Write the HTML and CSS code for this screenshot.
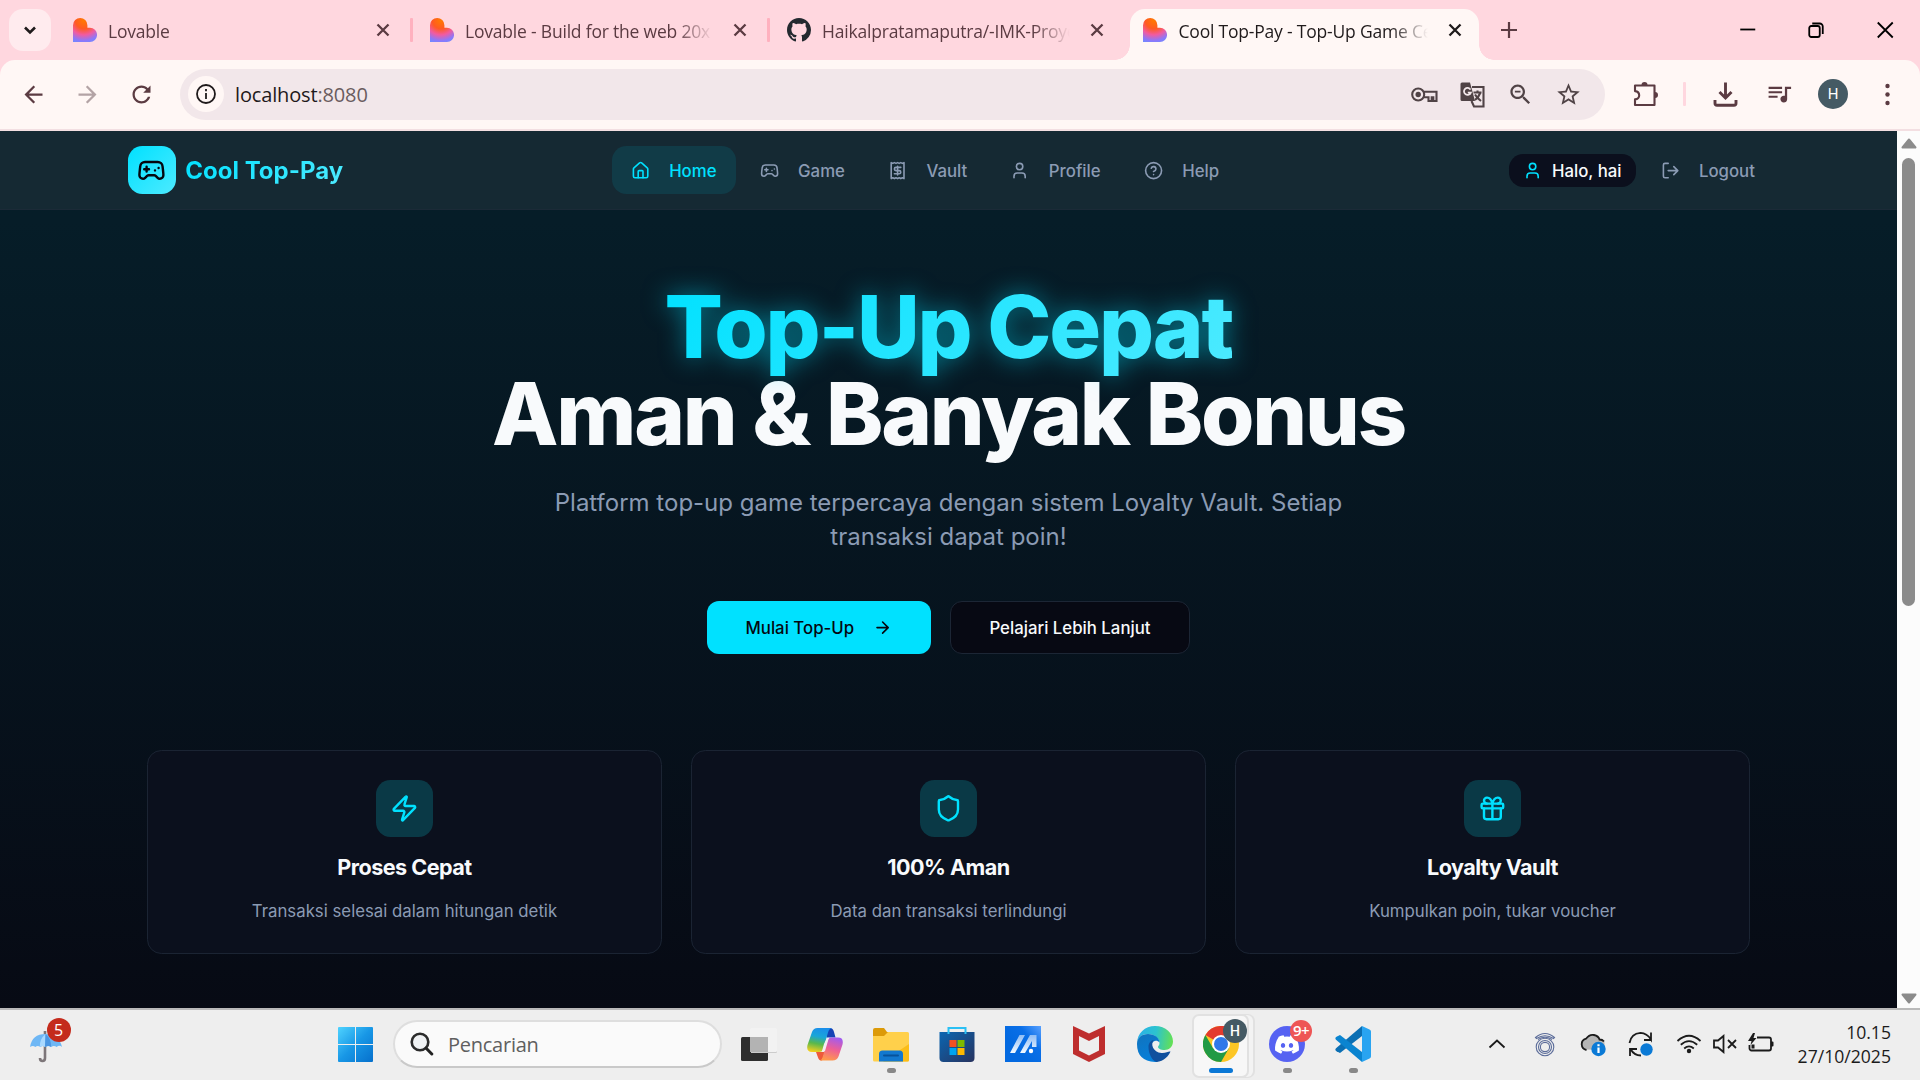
FILE: index.html
```html
<!DOCTYPE html>
<html lang="id">
<head>
<meta charset="utf-8">
<title>Cool Top-Pay - Top-Up Game Cepat</title>
<link rel="stylesheet" href="styles.css">
</head>
<body>
<svg class="defs" width="0" height="0" aria-hidden="true">
  <defs>
    <radialGradient id="heartFill" cx=".45" cy=".1" r="1" >
      <stop offset="0" stop-color="#ff7a00"/><stop offset=".35" stop-color="#ff5a22"/><stop offset=".6" stop-color="#f25ba0"/><stop offset=".85" stop-color="#8b78fb"/><stop offset="1" stop-color="#6c8cff"/>
    </radialGradient>
    <linearGradient id="win" x1="0" y1="0" x2="1" y2="1"><stop offset="0" stop-color="#4fd3ff"/><stop offset=".5" stop-color="#1897e6"/><stop offset="1" stop-color="#0670cc"/></linearGradient>
    <symbol id="heart" viewBox="0 0 24 24"><path fill="url(#heartFill)" d="M0 24V7.2a7.2 7.2 0 0 1 14.400 0v2.500h2.500a7.150 7.150 0 0 1 0 14.300z"/></symbol>
    <symbol id="close" viewBox="0 0 18 18"><path fill="none" stroke="currentColor" stroke-width="2.300" d="M3.500 3.500l11 11m0-11l-11 11"/></symbol>
    <symbol id="gamepad" viewBox="0 0 24 24"><path d="M6 11h4M8 9v4M15 12h.01M18 10h.01M17.320 5H6.680a4 4 0 0 0-3.978 3.590c-.006.052-.010.101-.017.152C2.604 9.416 2 14.456 2 16a3 3 0 0 0 3 3c1 0 1.500-.500 2-1l1.414-1.414A2 2 0 0 1 9.828 16h4.344a2 2 0 0 1 1.414.586L17 18c.500.500 1 1 2 1a3 3 0 0 0 3-3c0-1.545-.604-6.584-.685-7.258-.007-.050-.011-.100-.017-.151A4 4 0 0 0 17.320 5z"/></symbol>
    <symbol id="user" viewBox="0 0 24 24"><path d="M19 21v-2a4 4 0 0 0-4-4H9a4 4 0 0 0-4 4v2"/><circle cx="12" cy="7" r="4"/></symbol>
  </defs>
</svg>

<header class="tabstrip">
  <button class="tab-search"><svg width="18" height="18" viewBox="0 0 18 18"><path class="line" d="M4 6.500l5 5 5-5" stroke-width="2.600"/></svg></button>
  <div class="tab"><svg class="fav"><use href="#heart"/></svg><span class="tab-text">Lovable</span><svg class="x"><use href="#close"/></svg></div>
  <div class="tab"><svg class="fav"><use href="#heart"/></svg><span class="tab-text">Lovable - Build for the web 20x</span><svg class="x"><use href="#close"/></svg></div>
  <div class="tab last"><svg class="fav" viewBox="0 0 16 16"><path fill="#24292f" d="M8 0C3.580 0 0 3.580 0 8c0 3.540 2.290 6.530 5.470 7.590.400.070.550-.170.550-.380 0-.190-.010-.820-.010-1.490-2.010.370-2.530-.490-2.690-.940-.090-.230-.480-.940-.820-1.130-.280-.150-.680-.520-.010-.530.630-.010 1.080.580 1.230.820.720 1.210 1.870.870 2.330.660.070-.520.280-.870.510-1.070-1.780-.200-3.640-.890-3.640-3.950 0-.870.310-1.590.820-2.150-.080-.200-.360-1.020.080-2.120 0 0 .670-.210 2.200.820.640-.180 1.320-.270 2-.270s1.360.090 2 .270c1.530-1.040 2.200-.820 2.200-.820.440 1.100.160 1.920.080 2.120.510.560.820 1.270.820 2.150 0 3.070-1.870 3.750-3.650 3.950.290.250.540.730.540 1.480 0 1.070-.010 1.930-.010 2.200 0 .210.150.460.550.380A8.010 8.010 0 0 0 16 8c0-4.420-3.580-8-8-8z"/></svg><span class="tab-text">Haikalpratamaputra/-IMK-Proye</span><svg class="x"><use href="#close"/></svg></div>
  <div class="tab active"><svg class="fav"><use href="#heart"/></svg><span class="tab-text">Cool Top-Pay - Top-Up Game Ce</span><svg class="x"><use href="#close"/></svg></div>
  <svg class="newtab" width="18" height="18" viewBox="0 0 18 18"><path class="line" d="M9 1v16M1 9h16" stroke-width="2.200"/></svg>
  <div class="winctl">
    <svg viewBox="0 0 18 18"><path class="line" d="M1 8.500h15" stroke-width="2"/></svg>
    <svg viewBox="0 0 18 18"><rect class="line" x="2" y="5" width="10.500" height="11" rx="2"/><path class="line" d="M5 2.500h7.500a3 3 0 0 1 3 3v7.500"/></svg>
    <svg viewBox="0 0 18 18"><path class="line" d="M1.500 1.500l15 15m0-15l-15 15"/></svg>
  </div>
</header>

<div class="toolbar">
  <svg class="ic" viewBox="0 0 24 24"><path d="M20 11H7.830l5.590-5.590L12 4l-8 8 8 8 1.410-1.410L7.830 13H20v-2z"/></svg>
  <svg class="ic dim" viewBox="0 0 24 24"><path d="M4 11h12.170l-5.590-5.590L12 4l8 8-8 8-1.410-1.410L16.170 13H4v-2z"/></svg>
  <svg class="ic" viewBox="0 0 24 24"><path d="M17.650 6.350C16.200 4.900 14.210 4 12 4c-4.420 0-7.990 3.580-7.990 8s3.570 8 7.990 8c3.730 0 6.840-2.550 7.730-6h-2.080c-.820 2.330-3.040 4-5.650 4-3.310 0-6-2.690-6-6s2.690-6 6-6c1.660 0 3.140.690 4.220 1.780L13.500 10.500H20V4l-2.350 2.350z"/></svg>
  <div class="omnibox">
    <span class="info"><svg width="20" height="20" viewBox="0 0 20 20"><circle class="line" cx="10" cy="10" r="9"/><path class="line" d="M10 9v6M10 5v2.200"/></svg></span>
    <span class="url">localhost<span class="port">:8080</span></span>
    <svg class="ic" viewBox="0 0 27 27"><g class="line"><circle cx="7.200" cy="13.500" r="6"/><path d="M12.500 10.700h13v9.300h-3.200v-3.800h-1.600v3.800h-3.200v-3.800h-5"/></g><circle cx="7.200" cy="13.500" r="2.700"/></svg>
    <svg class="ic" viewBox="0 0 27 27"><path d="M3 1.500h8l5 18.500H3a1.500 1.500 0 0 1-1.500-1.500V3A1.500 1.500 0 0 1 3 1.500z"/><path d="M11.500 8.600a3.500 3.500 0 1 0 .3 3h-3" fill="none" stroke="#f2e7ea" stroke-width="1.800"/><path class="line" d="M13 6h11.500v19.500H15l-2.500-5.500" stroke-width="1.600"/><path class="line" d="M14.500 11.500h8m-4-2v2m3 0q-2 5-5.500 7.500m0-5.500q2.500 4 6 6.500" stroke-width="1.500"/></svg>
    <svg class="ic" viewBox="0 0 24 24"><path d="M15.500 14h-.790l-.280-.270C15.410 12.590 16 11.110 16 9.500 16 5.910 13.090 3 9.500 3S3 5.910 3 9.500 5.910 16 9.500 16c1.610 0 3.090-.590 4.230-1.570l.270.280v.790l5 4.990L20.490 19l-4.990-5zm-6 0C7.010 14 5 11.990 5 9.500S7.010 5 9.500 5 14 7.010 14 9.500 11.990 14 9.500 14zM7 8.700h5v1.600H7z"/></svg>
    <svg class="ic" viewBox="0 0 24 24"><path d="M22 9.240l-7.190-.620L12 2 9.190 8.630 2 9.240l5.460 4.730L5.820 21 12 17.270 18.180 21l-1.630-7.030L22 9.240zM12 15.400l-3.760 2.270 1-4.280-3.320-2.880 4.380-.380L12 6.100l1.710 4.040 4.380.380-3.320 2.880 1 4.280L12 15.400z"/></svg>
  </div>
  <svg class="ic ext" viewBox="0 0 27 27"><path class="line" d="M4 4.500h19.500v19.500H4v-5.600q4.200-.4 4.200-4.100T4 10.100z" stroke-width="2.300" stroke-linejoin="round"/><path d="M10.500 4a3 3 0 0 1 6 0zM24 11a3 3 0 0 1 0 6z" /></svg>
  <span class="tsep"></span>
  <svg class="ic bold" viewBox="0 0 27 27"><path class="line" d="M13.500 1.500v15M7.500 11l6 6 6-6M3 19v3.300a2 2 0 0 0 2 2h17a2 2 0 0 0 2-2V19"/></svg>
  <svg class="ic" viewBox="0 0 24 24"><path d="M14 4H2v2h12V4zm0 4H2v1.800h12V8zM2 13.800h8V12H2v1.800zM16.500 4v8.180c-.310-.110-.650-.180-1-.180-1.660 0-3 1.340-3 3s1.340 3.200 3 3.200 3-1.340 3-3V6h3.500V4h-5.500z" transform="translate(.3 1)"/></svg>
  <span class="avatar">H</span>
  <svg class="ic dots" viewBox="0 0 27 27"><circle cx="13.500" cy="5" r="2.200"/><circle cx="13.500" cy="13.500" r="2.200"/><circle cx="13.500" cy="22" r="2.200"/></svg>
</div>

<div class="viewport">
  <main class="page">
    <nav class="nav">
      <a class="brand"><span class="logo"><svg class="lu" width="28.800" height="28.800"><use href="#gamepad"/></svg></span><span class="brand-name">Cool Top-Pay</span></a>
      <div class="links">
        <a class="link on"><svg class="lu" viewBox="0 0 24 24"><path d="M15 21v-8a1 1 0 0 0-1-1h-4a1 1 0 0 0-1 1v8"/><path d="M3 10a2 2 0 0 1 .709-1.528l7-5.999a2 2 0 0 1 2.582 0l7 5.999A2 2 0 0 1 21 10v9a2 2 0 0 1-2 2H5a2 2 0 0 1-2-2z"/></svg>Home</a>
        <a class="link"><svg class="lu"><use href="#gamepad"/></svg>Game</a>
        <a class="link"><svg class="lu" viewBox="0 0 24 24"><path d="M4 2v20l2-1 2 1 2-1 2 1 2-1 2 1 2-1 2 1V2l-2 1-2-1-2 1-2-1-2 1-2-1-2 1Z"/><path d="M16 8h-6a2 2 0 1 0 0 4h4a2 2 0 1 1 0 4H8M12 17.500v-11"/></svg>Vault</a>
        <a class="link"><svg class="lu"><use href="#user"/></svg>Profile</a>
        <a class="link"><svg class="lu" viewBox="0 0 24 24"><circle cx="12" cy="12" r="10"/><path d="M9.090 9a3 3 0 0 1 5.830 1c0 2-3 3-3 3M12 17h.01"/></svg>Help</a>
      </div>
      <div class="account">
        <span class="hello"><svg class="lu"><use href="#user"/></svg>Halo, hai</span>
        <a class="logout"><svg class="lu" viewBox="0 0 24 24"><path d="M9 21H5a2 2 0 0 1-2-2V5a2 2 0 0 1 2-2h4M16 17l5-5-5-5M21 12H9"/></svg>Logout</a>
      </div>
    </nav>
    <section class="hero">
      <h1><span class="glow">Top-Up Cepat</span><br>Aman &amp; Banyak Bonus</h1>
      <p class="lead">Platform top-up game terpercaya dengan sistem Loyalty Vault. Setiap transaksi dapat poin!</p>
      <div class="cta">
        <button class="btn primary">Mulai Top-Up<svg class="lu" viewBox="0 0 24 24"><path d="M5 12h14M12 5l7 7-7 7"/></svg></button>
        <button class="btn outline">Pelajari Lebih Lanjut</button>
      </div>
    </section>
    <section class="cards">
      <article class="card"><span class="badge"><svg class="lu" viewBox="0 0 24 24"><path d="M4 14a1 1 0 0 1-.780-1.630l9.900-10.200a.500.500 0 0 1 .860.460l-1.920 6.020A1 1 0 0 0 13 10h7a1 1 0 0 1 .780 1.630l-9.900 10.200a.500.500 0 0 1-.860-.460l1.920-6.020A1 1 0 0 0 11 14z"/></svg></span><h3>Proses Cepat</h3><p>Transaksi selesai dalam hitungan detik</p></article>
      <article class="card"><span class="badge"><svg class="lu" viewBox="0 0 24 24"><path d="M20 13c0 5-3.500 7.500-7.660 8.950a1 1 0 0 1-.670-.010C7.500 20.500 4 18 4 13V6a1 1 0 0 1 1-1c2 0 4.500-1.200 6.240-2.720a1.170 1.170 0 0 1 1.520 0C14.510 3.810 17 5 19 5a1 1 0 0 1 1 1z"/></svg></span><h3>100% Aman</h3><p>Data dan transaksi terlindungi</p></article>
      <article class="card"><span class="badge"><svg class="lu" viewBox="0 0 24 24"><rect x="3" y="8" width="18" height="4" rx="1"/><path d="M12 8v13M19 12v7a2 2 0 0 1-2 2H7a2 2 0 0 1-2-2v-7M7.500 8a2.500 2.500 0 0 1 0-5A4.800 8 0 0 1 12 8a4.800 8 0 0 1 4.500-5 2.500 2.500 0 0 1 0 5"/></svg></span><h3>Loyalty Vault</h3><p>Kumpulkan poin, tukar voucher</p></article>
    </section>
  </main>
  <div class="scrollbar">
    <svg width="16" height="11" viewBox="0 0 16 11"><path d="M8 1.500L14.500 9.500h-13z"/></svg>
    <span class="thumb"></span>
    <svg width="16" height="11" viewBox="0 0 16 11"><path d="M8 9.500L1.500 1.500h13z"/></svg>
  </div>
</div>

<footer class="taskbar">
  <div class="widget"><svg width="34" height="34" viewBox="0 0 34 34"><path d="M16 1v3M16 14v14q0 3-2.500 3t-2.500-3" fill="none" stroke="#7d7679" stroke-width="2.600"/><path d="M1 17Q3 4 16.500 4T33 17q-2.700-2.400-5.300 0-2.800-2-5.600 0-2.800-2-5.600 0-2.500-2-5.200 0-2.600-2-5 0-2.300-2-5.300 0z" fill="#6eb7f5"/><path d="M16.500 4q-6 5-5.700 13 2.700-2 5.200 0z" fill="#a9d9ff"/><path d="M16.500 4q6 5 5.600 13-2.800-2-6.100 0z" fill="#4c97e2"/></svg><span class="count">5</span></div>
  <svg class="start" width="35" height="35" viewBox="0 0 35 35"><path fill="url(#win)" d="M1 0h16v17H0V1a1 1 0 0 1 1-1zM18 0h16a1 1 0 0 1 1 1v16H18zM0 18h17v17H1a1 1 0 0 1-1-1zM18 18h17v16a1 1 0 0 1-1 1H18z"/></svg>
  <div class="search"><svg width="24" height="24" viewBox="0 0 24 24"><circle cx="10" cy="10" r="8.300" fill="#f0f2f4" stroke="#2b2b2b" stroke-width="2.600"/><path d="M16.200 16.200l5.600 5.800" stroke="#222" stroke-width="3" stroke-linecap="round"/></svg><span>Pencarian</span></div>
  <div class="apps">
    <span class="app"><svg viewBox="0 0 36 36"><rect x="0" y="11" width="27" height="24" rx="1.500" fill="#2e2e2e"/><rect x="9" y="2" width="27" height="24" rx="1.500" fill="#f2f2f2"/><path d="M9 11h18v15H9z" fill="#b3b3b3"/><path d="M10 26.500h25a1 1 0 0 0 1-1" fill="none" stroke="#ccc"/></svg></span>
    <span class="app"><svg viewBox="0 0 36 36"><defs><linearGradient id="c1" x1=".5" y1="0" x2=".3" y2="1"><stop offset="0" stop-color="#1b8fea"/><stop offset=".35" stop-color="#1aa6d8"/><stop offset=".65" stop-color="#59b84c"/><stop offset="1" stop-color="#f5cf1e"/></linearGradient><linearGradient id="c2" x1=".7" y1="0" x2=".4" y2="1"><stop offset="0" stop-color="#a15bf0"/><stop offset=".5" stop-color="#ee5f95"/><stop offset="1" stop-color="#ff9a4a"/></linearGradient></defs><path fill="#1542b5" d="M19 2h4q3 0 4 4l1.500 5.500h-9z"/><path fill="#ee5a3a" d="M9 26h9l-3 8.500q-3 .5-4-3z"/><path fill="url(#c1)" d="M10.500 2H25q-3 .8-4 4.500l-5 17Q15 26 12 26H5q-6 0-4.500-7L5 6Q6.500 2 10.500 2z"/><path fill="url(#c2)" d="M25.500 34.500H12.500q2.500-.5 3.500-4.500l4.500-15.500Q21.500 11.500 25 11.500h6q6 0 4.500 7l-4 12q-1.500 4-6 4z"/><path fill="#f4edf2" d="M17 18q2-5 5-6.500l-4 13.500h-3z"/></svg></span>
    <span class="app run"><svg viewBox="0 0 36 36"><path d="M0 4a2 2 0 0 1 2-2h9l3 4h10v6H0z" fill="#dc9a08"/><path d="M0 10h11l4-4h19.500A1.500 1.500 0 0 1 36 7.500V34a1.500 1.500 0 0 1-1.500 1.500h-33A1.500 1.500 0 0 1 0 34z" fill="#ffd04b"/><path d="M36 18v16a1.500 1.500 0 0 1-1.500 1.500H10z" fill="#fbbd17"/><path d="M6 35.500V28a3.500 3.500 0 0 1 3.500-3.500h17A3.500 3.500 0 0 1 30 28v7.500z" fill="#1278cf"/><path d="M11 29.500h14" stroke="#07529b" stroke-width="2" stroke-linecap="round"/></svg></span>
    <span class="app"><svg viewBox="0 0 36 36"><defs><linearGradient id="st" x1="0" y1="0" x2="1" y2="1"><stop offset="0" stop-color="#0a66b2"/><stop offset="1" stop-color="#28335f"/></linearGradient></defs><path d="M.500 6h35v26a4 4 0 0 1-4 4h-27a4 4 0 0 1-4-4z" fill="url(#st)"/><path d="M9.500 8V2h17v6" fill="none" stroke="#2ac0f4" stroke-width="2"/><path d="M10.500 14h7v7h-7z" fill="#f25022"/><path d="M18.500 14h7v7h-7z" fill="#7fba00"/><path d="M10.500 22h7v7h-7z" fill="#00a4ef"/><path d="M18.500 22h7v7h-7z" fill="#ffb900"/></svg></span>
    <span class="app"><svg viewBox="0 0 36 36"><defs><linearGradient id="asus" x1=".3" y1=".6" x2="1" y2="0"><stop offset="0" stop-color="#0369e0"/><stop offset=".5" stop-color="#0a6fe8"/><stop offset="1" stop-color="#59a1ff"/></linearGradient><linearGradient id="asus2" x1="0" y1="0" x2="0" y2="1"><stop offset="0" stop-color="#8fbdf5"/><stop offset="1" stop-color="#f4faff"/></linearGradient></defs><path fill="url(#asus)" d="M0 0h36v36H0z"/><path d="M5 27L14.500 9H20L10 27zM15 27l10-18h6.500v12h-4.500v-6L20 27z" fill="url(#asus2)"/><circle cx="26" cy="25" r="2.200" fill="#fff"/></svg></span>
    <span class="app"><svg viewBox="0 0 36 36"><path fill="#be2e2e" d="M2 0l16 7.500L34 0v28l-16 8L2 28zM8 10v14.500l10 5 10-5V10l-10 5z"/></svg></span>
    <span class="app"><svg viewBox="0 0 36 36"><defs><linearGradient id="e1" x1="0" y1=".5" x2="1" y2=".6"><stop offset="0" stop-color="#2ab0e8"/><stop offset=".5" stop-color="#2cc3cf"/><stop offset="1" stop-color="#65e152"/></linearGradient><linearGradient id="e2" x1=".3" y1="0" x2=".7" y2="1"><stop offset="0" stop-color="#1074c0"/><stop offset="1" stop-color="#0580dc"/></linearGradient></defs><path fill="url(#e1)" d="M0 18C0 7 8 0 18 0c11 0 18 7.500 18 15.500 0 5-4 8.500-8.500 8.500-4 0-6.500-1.500-6.500-3 0-1 1.500-1.500 1.500-4C22.500 12 17 8 11 8 4 8 0 13 0 18z"/><path fill="url(#e2)" d="M0 18C0 12 4.500 8 11 8c6.500 0 11.500 4 11.500 8.500-2-2.500-6-2.500-7.500 1-2 5 0 13 6 18Q19 36 18 36 0 35 0 18z"/><path fill="#10509e" d="M11.500 21c0-4 2.500-7 5.500-7-4 3.500-1 12.500 7.500 13 4.500.3 7-2 9-1.500-1.500 4-6.500 10-14 10.500-4-1-8-8-8-15z"/></svg></span>
    <span class="app current"><svg viewBox="0 0 36 36"><circle cx="18" cy="18" r="18" fill="#fcc625"/><path d="M18 18L2.400 9A18 18 0 0 1 33.600 9z" fill="#e33b2e"/><path d="M18 0a18 18 0 0 1 15.600 9H18z" fill="#e33b2e"/><path d="M2.400 9A18 18 0 0 0 18 36l7.800-13.500L18 18l-7.800 4.500z" fill="#219a45"/><circle cx="18" cy="18" r="9" fill="#fff"/><circle cx="18" cy="18" r="7" fill="#2f78ea"/></svg><span class="note dark">H</span></span>
    <span class="app run"><svg viewBox="0 0 36 36"><circle cx="18" cy="18" r="18" fill="#5662f2"/><path fill="#fff" transform="translate(6 6.500)" d="M20.317 4.370a19.800 19.800 0 0 0-4.885-1.515.074.074 0 0 0-.079.037c-.210.375-.444.865-.608 1.250a18.300 18.300 0 0 0-5.487 0 12.600 12.600 0 0 0-.617-1.250.077.077 0 0 0-.079-.037A19.700 19.700 0 0 0 3.677 4.370a.070.070 0 0 0-.032.027C.533 9.046-.320 13.580.099 18.057a.082.082 0 0 0 .031.057 19.900 19.900 0 0 0 5.993 3.030.078.078 0 0 0 .084-.028c.462-.630.874-1.295 1.226-1.994a.076.076 0 0 0-.041-.106 13.100 13.100 0 0 1-1.872-.892.077.077 0 0 1-.008-.128c.126-.094.252-.192.372-.292a.074.074 0 0 1 .077-.010c3.928 1.793 8.180 1.793 12.062 0a.074.074 0 0 1 .078.010c.120.098.246.198.373.292a.077.077 0 0 1-.006.127 12.300 12.300 0 0 1-1.873.892.077.077 0 0 0-.041.107c.360.698.772 1.362 1.225 1.993a.076.076 0 0 0 .084.028 19.800 19.800 0 0 0 6.002-3.030.077.077 0 0 0 .032-.054c.500-5.177-.838-9.674-3.549-13.660a.061.061 0 0 0-.031-.030zM8.020 15.330c-1.183 0-2.157-1.085-2.157-2.419 0-1.333.956-2.419 2.157-2.419 1.210 0 2.176 1.096 2.157 2.420 0 1.333-.956 2.418-2.157 2.418zm7.975 0c-1.183 0-2.157-1.085-2.157-2.419 0-1.333.955-2.419 2.157-2.419 1.210 0 2.176 1.096 2.157 2.420 0 1.333-.946 2.418-2.157 2.418z"/></svg><span class="note red">9+</span></span>
    <span class="app run"><svg viewBox="0 0 36 36"><path d="M27 0v10L5 27l-3.500-1.700a2 2 0 0 1-.5-3z" fill="#0b6fb3"/><path d="M27 36V26L5 9 1.500 10.700a2 2 0 0 0-.5 3z" fill="#0a84d0"/><path d="M27 0l7.500 3.500A2.500 2.500 0 0 1 36 6v24a2.500 2.500 0 0 1-1.500 2.500L27 36z" fill="#29a4f1"/></svg></span>
  </div>
  <div class="tray">
    <svg viewBox="0 0 26 26"><path class="line" d="M5.500 16.500L13 9.500l7.500 7" stroke-width="2.200"/></svg>
    <svg viewBox="0 0 26 26"><g fill="none" stroke="#5c6d9a" stroke-width="1.100"><circle cx="13" cy="16" r="8.800"/><circle cx="13" cy="16" r="6.500"/><circle cx="13" cy="16" r="4.600"/><path d="M3.500 6.500Q13-1.500 22.500 6.500l-1 1Q13 2 4.500 7.500zM6 8.500Q13 4 20 8.500"/></g></svg>
    <svg viewBox="0 0 26 26"><path d="M6.500 18.500a5.500 5.500 0 0 1-.5-11Q9.500 3.500 14 4.500t5 4q4 0 5.500 3V19z" fill="#b5b5b5"/><path class="line" d="M6.500 19a5.800 5.800 0 0 1-.5-11.300Q9.500 3 14 4t5.500 4.500q3 0 4.500 2" stroke-width="1.600"/><circle cx="18.500" cy="18" r="7.200" fill="#0b7ad6"/><path d="M18.500 16.500v5.500M18.500 13.300v2" stroke="#fff" stroke-width="2.200"/></svg>
    <svg viewBox="0 0 26 26"><path class="line" d="M1.500 12Q3 2.500 12.500 1.800 19 2 23 8.500V1.500M23.500 9h-7.500M2 25v-7h7M2.500 18Q6 24.500 13 24.500" stroke-width="1.600"/><circle cx="18.500" cy="18.500" r="6.200" fill="#0b7ad6"/></svg>
    <svg class="sm first" viewBox="0 0 26 26"><path class="line" d="M1.500 10Q13-.5 24.500 10M4.800 13.700Q13 6.500 21.200 13.700M8.200 17.500Q13 13.300 17.800 17.500" stroke-width="1.900"/><circle cx="13" cy="20" r="2.200"/></svg>
    <svg class="sm" viewBox="0 0 26 26"><path class="line" d="M2 9.500h4L11.500 5v16L6 16.500H2zM16 9l8 8m0-8l-8 8" stroke-width="1.600"/></svg>
    <svg class="sm" viewBox="0 0 26 26"><path class="line" d="M9 6.500h12a2 2 0 0 1 2 2v9a2 2 0 0 1-2 2H3.500a2 2 0 0 1-2-2V14" stroke-width="1.900"/><path d="M23 10.500h1.500a1 1 0 0 1 1 1v3a1 1 0 0 1-1 1H23zM5 2L0 10h3.500L2.500 14l6-7H5.500L7 2zM3.500 13.500h3v4h-3z"/></svg>
    <div class="clock">10.15<br>27/10/2025</div>
  </div>
</footer>
</body>
</html>
```
FILE: styles.css
```css
* { box-sizing: border-box; }
body {
  margin: 0;
  width: 1920px;
  height: 1080px;
  overflow: hidden;
  display: flex;
  flex-direction: column;
  background: #ffd7df;
  font-family: "Open Sans", "Noto Sans", sans-serif;
}
svg { display: block; flex: none; }
.defs { position: absolute; }
.line { fill: none; stroke: currentColor; stroke-width: 1.8; }
button { border: 0; padding: 0; }

/* Tab strip */
.tabstrip { display: flex; align-items: flex-end; height: 60px; flex: none; padding-left: 9px; background: #ffd7df; color: #5b3b42; }
.tab-search { width: 42px; height: 42px; margin: 0 5px 9px 0; border-radius: 14px; background: #ffebee; color: #1f1a1b; display: grid; place-items: center; }
.tab-search .line { stroke-width: 2.6; }
.tab { display: flex; align-items: center; width: 357px; height: 51px; padding: 0 0 9px 16.5px; flex: none; }
.tab::after { content: ""; width: 3px; height: 24px; margin-left: 18px; background: #ffb1bf; border-radius: 1px; }
.tab.last::after, .tab.active::after { visibility: hidden; }
.fav { width: 24px; height: 24px; }
.tab-text { flex: 1; width: 0; margin: 1px 15px 0 11.5px; overflow: hidden; white-space: nowrap; font-size: 17.5px; letter-spacing: -.2px; line-height: 26px; mask-image: linear-gradient(90deg, #000 calc(100% - 40px), transparent calc(100% - 3px)); }
.x { width: 18px; height: 18px; }
.tab.active { position: relative; width: 348.5px; margin: 0 0 0 3px; padding-left: 13px; background: #fff7f5; border-radius: 15px 15px 0 0; color: #1f1a1b; }
.tab.active::after { margin-left: 12px; }
.tab.active::before { content: ""; position: absolute; left: -15px; right: -15px; bottom: 0; height: 15px; background: radial-gradient(circle at 0 0, transparent 14.5px, #fff7f5 15px) left / 15px 15px no-repeat, radial-gradient(circle at 100% 0, transparent 14.5px, #fff7f5 15px) right / 15px 15px no-repeat; }
.newtab { margin: 0 0 21px 21px; }
.newtab .line { stroke-width: 2.2; }
.winctl { display: flex; gap: 50px; margin: 0 26px 21px auto; color: #000; }
.winctl svg { width: 18.500px; height: 18px; }

/* Toolbar */
.toolbar { display: flex; align-items: center; gap: 27px; height: 71px; flex: none; padding: 0 19.500px 1px; border-bottom: 2px solid #f3dfe2; border-radius: 15px 15px 0 0; background: #fff7f5; color: #5b3b42; }
.ic { width: 27px; height: 27px; fill: currentColor; }
.ic .line { stroke-width: 2.100; }
.bold .line { stroke-width: 2.9; }
.dim { color: #b3a3a5; }
.omnibox { display: flex; align-items: center; gap: 21px; width: 1425px; height: 51px; margin-left: -1.500px; padding: 0 22.500px 0 8px; border-radius: 26px; background: #f2e7ea; color: #504346; }
.info { width: 36px; height: 36px; display: grid; place-items: center; border-radius: 50%; background: #fff7f5; color: #1f1a1b; }
.url { flex: 1; margin-left: -10px; font-size: 20px; letter-spacing: -.15px; color: #1f1a1b; }
.port { color: #6a5c5f; }
.ext { margin-left: -1px; }
.tsep { width: 3px; height: 24px; margin: 0 -1px 0 -2px; border-radius: 1px; background: #ffd7df; }
.avatar { width: 30px; height: 30px; margin: 0 -1.500px; border-radius: 50%; background: #455a64; color: #fff; font: 15px/30px Roboto, sans-serif; text-align: center; }

/* Page */
.viewport { display: flex; flex: 1; min-height: 0; }
.page { width: 1897px; background: linear-gradient(180deg, #051d28 0, #061d28 90px, #070a14 877px); font-family: Inter, sans-serif; color: #f8fafc; overflow: hidden; }
.lu { width: 19.200px; height: 19.200px; fill: none; stroke: currentColor; stroke-width: 2; stroke-linecap: round; stroke-linejoin: round; }
.nav { display: flex; align-items: center; justify-content: space-between; height: 79px; padding: 0 127.700px; border-bottom: 1px solid #1b2a37; background: #152933; font-size: 16.800px; font-weight: 500; color: #8b9bb4; }
.brand { display: flex; align-items: center; gap: 9.600px; }
.logo { width: 48px; height: 48px; display: grid; place-items: center; border-radius: 14.400px; background: linear-gradient(135deg, #00e1ff, #4deaff); color: #05070f; }
.logo .lu { width: 28.800px; height: 28.800px; }
.brand-name { font-size: 24px; font-weight: 700; background: linear-gradient(135deg, #00e1ff, #4deaff); background-clip: text; color: transparent; }
.links { display: flex; gap: 4.800px; margin: 0 1px 0 -1px; }
.link { display: flex; align-items: center; gap: 19.200px; height: 48px; padding: 1px 19.200px 0; border-radius: 14.400px; }
.link.on { background: #113b47; color: #00e1ff; }
.account { display: flex; align-items: center; gap: 9.600px; }
.hello { display: flex; align-items: center; gap: 9.600px; height: 33px; margin-right: .6px; padding: 1px 14.400px 0; border-radius: 14.400px; background: #0b0f1d; color: #f8fafc; }
.hello .lu { color: #00e1ff; }
.logout { display: flex; align-items: center; gap: 19.200px; padding: 1px 14.400px 0; }

.hero { padding-top: 74.400px; text-align: center; }
h1 { margin: 0; font-size: 86.400px; line-height: 1; font-weight: 800; letter-spacing: -.025em; }
.glow { background: linear-gradient(135deg, #00e1ff, #4deaff); background-clip: text; color: transparent; filter: drop-shadow(0 0 12px rgba(0, 225, 255, .5)); }
.lead { width: 806.400px; margin: 28.800px auto 48px; font-size: 24px; line-height: 33.600px; color: #8b9bb4; }
.cta { display: flex; justify-content: center; gap: 19.200px; }
.btn { display: flex; align-items: center; gap: 19.200px; height: 52.800px; padding: 0 38.400px; border-radius: 12px; font: 500 16.800px Inter, sans-serif; }
.primary { background: #00e1ff; color: #05070f; }
.outline { border: 1px solid #1c2635; background: #070913; color: #f8fafc; }

.cards { display: grid; grid-template-columns: repeat(3, 1fr); gap: 28.800px; margin: 96px 146.900px 0; }
.card { display: flex; flex-direction: column; align-items: center; height: 204px; padding: 28.800px; border: 1px solid #1b2433; border-radius: 14.400px; background: #0b101d; text-align: center; }
.badge { width: 57.600px; height: 57.600px; display: grid; place-items: center; border-radius: 14.400px; background: #0a3946; color: #00e1ff; }
.badge .lu { width: 28.800px; height: 28.800px; }
.card h3 { margin: 14.400px 0; font-size: 21.600px; line-height: 33.600px; font-weight: 700; letter-spacing: -.025em; }
.card p { margin: 0; font-size: 16.800px; line-height: 24.800px; color: #8b9bb4; }

.scrollbar { width: 23px; display: flex; flex-direction: column; align-items: center; padding: 7px 0 4px; background: #fcfcfc; }
.scrollbar svg { fill: #8b8b8b; stroke: #8b8b8b; stroke-width: 2; stroke-linejoin: round; }
.thumb { width: 13px; height: 448px; margin: 9px 0 auto; border-radius: 7px; background: #8b8b8b; }

/* Taskbar */
.taskbar { display: flex; align-items: center; flex: none; height: 72px; padding-bottom: 2px; border-top: 2px solid #bababa; background: #eee; color: #1b1b1b; }
.widget { position: relative; width: 34px; height: 34px; margin: 6px 0 0 29px; }
.count, .note { position: absolute; border-radius: 50%; color: #fff; text-align: center; }
.count { left: 17.5px; top: -12px; width: 24px; height: 24px; background: #c42b1c; font-size: 16px; line-height: 24px; }
.start { margin: 0 20px 0 275px; }
.search { display: flex; align-items: center; gap: 14px; width: 329px; height: 48px; padding-left: 15px; border: 2px solid #dedede; border-bottom-color: #c9c9c9; border-radius: 24px; background: #fafafa; font-size: 20px; letter-spacing: -.25px; color: #5f5f5f; }
.apps { display: flex; margin-left: 4px; }
.app { position: relative; display: grid; place-items: center; width: 66px; height: 68px; }
.app > svg { position: relative; width: 36px; height: 36px; }
.run::after, .current::after { content: ""; position: absolute; left: 28.500px; bottom: 5px; width: 9px; height: 5px; border-radius: 3px; background: #888; }
.current::after { left: 21px; width: 24px; background: #0b78d6; }
.current::before { content: ""; position: absolute; left: 4px; top: 4px; width: 53px; height: 60px; border: 2px solid #e1e1e1; border-radius: 7px; background: #f7f7f7; box-shadow: 5px 0 0 -1px #f3f3f3, 6px 0 0 0 #e1e1e1; }
.note { left: 35px; top: 9px; width: 24px; height: 24px; font-size: 14px; line-height: 24px; }
.dark { background: #455a64; font-family: Roboto, sans-serif; font-weight: 500; }
.red { left: 36px; top: 10px; width: 22px; height: 22px; background: #ee5555; font-size: 15px; font-weight: 600; line-height: 21px; letter-spacing: -.5px; }
.tray { display: flex; align-items: center; margin: 0 29px 0 auto; }
.tray > svg { width: 26px; height: 26px; margin: 0 11px; fill: currentColor; }
.tray > .sm { margin: 0 5px; }
.tray > .first { margin-left: 11px; }
.clock { width: 112px; text-align: right; font-size: 17.600px; line-height: 24px; letter-spacing: 0; }
```
